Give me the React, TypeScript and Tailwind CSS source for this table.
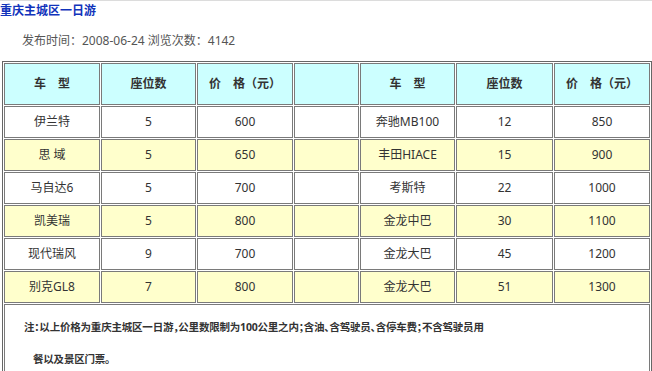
import React from 'react';

// car rental price list, two vehicle groups side by side
const LEFT = [
  { name: '伊兰特', seats: '5', price: '600' },
  { name: '思 域', seats: '5', price: '650' },
  { name: '马自达6', seats: '5', price: '700' },
  { name: '凯美瑞', seats: '5', price: '800' },
  { name: '现代瑞风', seats: '9', price: '700' },
  { name: '别克GL8', seats: '7', price: '800' },
];

const RIGHT = [
  { name: '奔驰MB100', seats: '12', price: '850' },
  { name: '丰田HIACE', seats: '15', price: '900' },
  { name: '考斯特', seats: '22', price: '1000' },
  { name: '金龙中巴', seats: '30', price: '1100' },
  { name: '金龙大巴', seats: '45', price: '1200' },
  { name: '金龙大巴', seats: '51', price: '1300' },
];

const th = 'border border-[#7a7a7a] bg-[#ccffff] h-[42px] p-0 text-[12px] font-bold text-[#333]';
const td = 'border border-[#7a7a7a] h-[32px] p-0 text-[12px] text-[#333] font-normal';

const App: React.FC = () => {
  return (
    <div className="w-[652px] h-[371px] overflow-hidden bg-white border-t border-[#dcdcdc] font-['Noto_Sans','Noto_Sans_CJK_SC',sans-serif]">
      <div className="h-[20px] leading-[20px] text-[12px] font-bold text-[#1133bb]">重庆主城区一日游</div>
      <div className="mt-[10px] h-[20px] leading-[20px] pl-[22px] text-[12px] text-[#555]">
        发布时间：2008-06-24 浏览次数：4142
      </div>

      <table className="mt-[10px] ml-[2px] w-[650px] table-fixed border-separate border-spacing-[1px] border border-[#666] text-center">
        <thead>
          <tr>
            <th className={`${th} w-[96px]`}>车　型</th>
            <th className={`${th} w-[95px]`}>座位数</th>
            <th className={`${th} w-[96px]`}>价　格（元）</th>
            <th className={`${th} w-[65px]`}></th>
            <th className={`${th} w-[95px]`}>车　型</th>
            <th className={`${th} w-[97px]`}>座位数</th>
            <th className={`${th} w-[96px]`}>价　格（元）</th>
          </tr>
        </thead>
        <tbody>
          {LEFT.map((l, i) => {
            const r = RIGHT[i];
            const bg = i % 2 === 1 ? 'bg-[#ffffcc]' : 'bg-white';
            return (
              <tr key={i}>
                <td className={`${td} ${bg}`}>{l.name}</td>
                <td className={`${td} ${bg}`}>{l.seats}</td>
                <td className={`${td} ${bg}`}>{l.price}</td>
                <td className={`${td} ${bg}`}></td>
                <td className={`${td} ${bg}`}>{r.name}</td>
                <td className={`${td} ${bg}`}>{r.seats}</td>
                <td className={`${td} ${bg}`}>{r.price}</td>
              </tr>
            );
          })}
          <tr>
            <td colSpan={7} className="border border-[#7a7a7a] p-0 text-left text-[10.5px] font-bold text-[#333] tracking-[-0.2px] [font-feature-settings:'halt']">
              <div className="pl-[19px] pt-[6px] leading-[32px]">
                注：以上价格为重庆主城区一日游，公里数限制为100公里之内；含油、含驾驶员、含停车费；不含驾驶员用
              </div>
              <div className="pl-[28px] leading-[32px]">餐以及景区门票。</div>
            </td>
          </tr>
        </tbody>
      </table>
    </div>
  );
};

export default App;
